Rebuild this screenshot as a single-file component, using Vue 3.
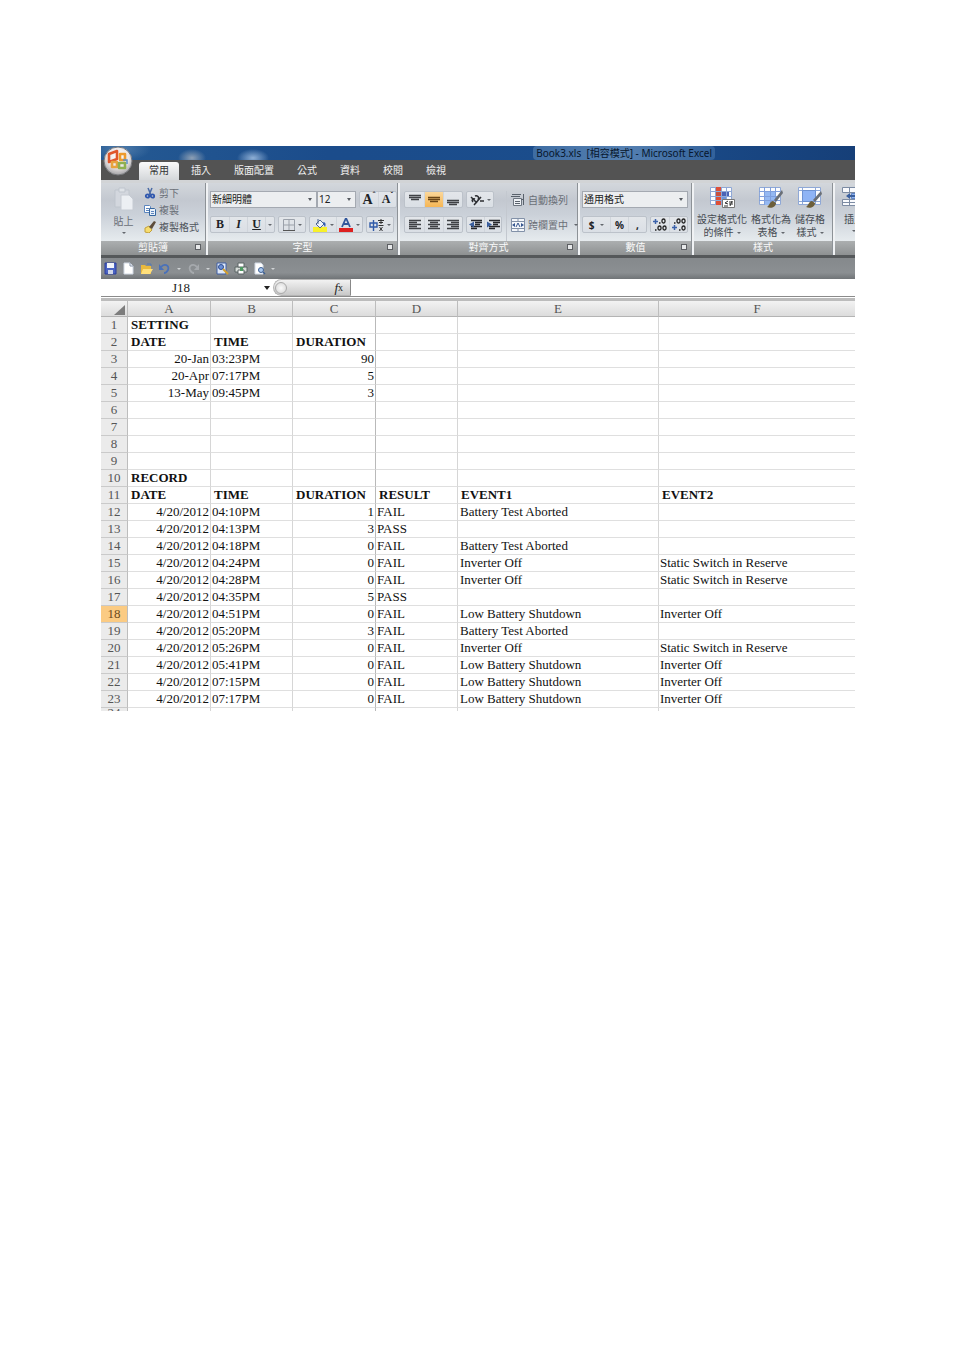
<script setup>
import { ref } from 'vue'

const tabs = ['常用', '插入', '版面配置', '公式', '資料', '校閱', '檢視']
const activeTab = ref('常用')
const fontName = ref('新細明體')
const fontSize = ref('12')
const numberFormat = ref('通用格式')
const cellName = ref('J18')
const formula = ref('')
const selectedRow = 18

const columns = ['A', 'B', 'C', 'D', 'E', 'F']

const head = ['DATE', 'TIME', 'DURATION']
const empty = () => ['', '', '', '', '', '']
const rows = [
  { bold: true, cells: ['SETTING', '', '', '', '', ''] },
  { bold: true, cells: [...head, '', '', ''] },
  { cells: ['20-Jan', '03:23PM', '90', '', '', ''] },
  { cells: ['20-Apr', '07:17PM', '5', '', '', ''] },
  { cells: ['13-May', '09:45PM', '3', '', '', ''] },
  { cells: empty() },
  { cells: empty() },
  { cells: empty() },
  { cells: empty() },
  { bold: true, cells: ['RECORD', '', '', '', '', ''] },
  { bold: true, cells: [...head, 'RESULT', 'EVENT1', 'EVENT2'] },
  { cells: ['4/20/2012', '04:10PM', '1', 'FAIL', 'Battery Test Aborted', ''] },
  { cells: ['4/20/2012', '04:13PM', '3', 'PASS', '', ''] },
  { cells: ['4/20/2012', '04:18PM', '0', 'FAIL', 'Battery Test Aborted', ''] },
  { cells: ['4/20/2012', '04:24PM', '0', 'FAIL', 'Inverter Off', 'Static Switch in Reserve'] },
  { cells: ['4/20/2012', '04:28PM', '0', 'FAIL', 'Inverter Off', 'Static Switch in Reserve'] },
  { cells: ['4/20/2012', '04:35PM', '5', 'PASS', '', ''] },
  { cells: ['4/20/2012', '04:51PM', '0', 'FAIL', 'Low Battery Shutdown', 'Inverter Off'] },
  { cells: ['4/20/2012', '05:20PM', '3', 'FAIL', 'Battery Test Aborted', ''] },
  { cells: ['4/20/2012', '05:26PM', '0', 'FAIL', 'Inverter Off', 'Static Switch in Reserve'] },
  { cells: ['4/20/2012', '05:41PM', '0', 'FAIL', 'Low Battery Shutdown', 'Inverter Off'] },
  { cells: ['4/20/2012', '07:15PM', '0', 'FAIL', 'Low Battery Shutdown', 'Inverter Off'] },
  { cells: ['4/20/2012', '07:17PM', '0', 'FAIL', 'Low Battery Shutdown', 'Inverter Off'] }
]
</script>

<template>
  <main class="page">
    <section class="excel">
      <header class="titlebar">
        <h1>Book3.xls&nbsp; [相容模式] - Microsoft Excel</h1>
      </header>

      <button class="office" aria-label="Office">
        <svg width="30" height="30" viewBox="0 0 30 30">
          <defs>
            <radialGradient id="orb" cx="50%" cy="35%" r="65%">
              <stop offset="0" stop-color="#ffffff" />
              <stop offset="0.6" stop-color="#e9e4e4" />
              <stop offset="1" stop-color="#a3a3a6" />
            </radialGradient>
          </defs>
          <circle cx="15" cy="15" r="14" fill="url(#orb)" stroke="#77787c" />
          <g fill="none" stroke-width="2.6" stroke-linejoin="round">
            <path d="M6 8l8-3v8l-8 3z" stroke="#e0562a" />
            <path d="M17 8h5v6h-5z" stroke="#ee9a2b" />
            <path d="M9 16h5v5H9z" stroke="#e8a33d" />
            <path d="M16 17h6v5h-6z" stroke="#8fb04f" />
          </g>
          <path d="M20 14h4v4" stroke="#5b8fc9" stroke-width="1.5" fill="none" />
        </svg>
      </button>

      <nav class="tabs">
        <button
          v-for="t in tabs"
          :key="t"
          class="tab"
          :class="{ active: t === activeTab }"
          @click="activeTab = t"
        >{{ t }}</button>
      </nav>

      <div class="ribbon">
        <section class="group clipboard">
          <div class="body">
            <button class="big faded">
              <svg width="22" height="24" viewBox="0 0 22 24">
                <path d="M2 3h14v17H2z" fill="#d3d7de" stroke="#bfc5cd" />
                <path d="M6 1h6v4H6z" fill="#dfe3e8" stroke="#bfc5cd" />
                <path d="M8 8h8l4 4v11H8z" fill="#eceff3" stroke="#c6cbd3" />
              </svg>
              <span>貼上</span>
              <i class="arrow"></i>
            </button>
            <div class="stack">
              <button class="small faded">
                <svg width="12" height="12" viewBox="0 0 12 12">
                  <path d="M4 1l3 7M8 1L5 8" stroke="#4a6aa5" stroke-width="1.5" />
                  <circle cx="3.500" cy="9" r="1.700" fill="none" stroke="#2f57ae" stroke-width="1.800" />
                  <circle cx="8.500" cy="9" r="1.700" fill="none" stroke="#2f57ae" stroke-width="1.800" />
                </svg>剪下
              </button>
              <button class="small faded">
                <svg width="12" height="12" viewBox="0 0 12 12">
                  <path d="M.5 1.500h5l1 1v6h-6z" fill="#fff" stroke="#5c86bf" />
                  <path d="M5.500 4.500h5l1 1v6h-6z" fill="#e8f0fa" stroke="#35669f" />
                  <path d="M7 7.500h3M7 9.500h3M2 4.500h3M2 6.500h3" stroke="#5c86bf" />
                </svg>複製
              </button>
              <button class="small">
                <svg width="12" height="12" viewBox="0 0 12 12">
                  <path d="M1 7l4-2 3 4-3 3-4-1z" fill="#f6dc6e" stroke="#c2a03c" />
                  <path d="M5 6l5-6 2 1-4 7z" fill="#5d4c3a" />
                </svg>複製格式
              </button>
            </div>
          </div>
          <footer>剪貼簿<i class="launch"></i></footer>
        </section>

        <section class="group font">
          <div class="body rows">
            <div class="line">
              <div class="pick wide"><select v-model="fontName" aria-label="字型"><option>新細明體</option></select></div>
              <div class="pick size"><select v-model="fontSize" aria-label="大小"><option>12</option></select></div>
              <div class="set">
                <button class="serif grow" aria-label="放大字型">A<sup>ˆ</sup></button>
                <button class="serif shrink" aria-label="縮小字型">A<sup>ˇ</sup></button>
              </div>
            </div>
            <div class="line">
              <div class="set">
                <button class="serif">B</button>
                <button class="serif it">I</button>
                <button class="serif un">U</button>
                <button class="drop" aria-label="底線選項"><i class="arrow"></i></button>
              </div>
              <div class="set">
                <button class="duo" aria-label="框線">
                  <svg width="12" height="12" viewBox="0 0 12 12"><path d="M.5.5h11v11M.5.500v11M6 .500v11M.5 6h11" fill="none" stroke="#9ba1aa" /><path d="M0 11.500h12" stroke="#555" /></svg>
                  <i class="arrow"></i>
                </button>
              </div>
              <div class="set">
                <button class="duo" aria-label="填滿色彩">
                  <svg width="14" height="14" viewBox="0 0 14 14">
                    <path d="M0 9h14v5H0z" fill="#f7f02a" />
                    <path d="M3 6l4-4 4 4-4 4z" fill="#eef3fb" stroke="#4c6694" />
                    <path d="M5 1v5" stroke="#4c6694" />
                    <path d="M10 4c3 0 3 3 2 5-1-1-1-3-2-5z" fill="#2f5cb4" />
                  </svg>
                  <i class="arrow"></i>
                </button>
                <button class="duo" aria-label="字型色彩">
                  <svg width="14" height="14" viewBox="0 0 14 14">
                    <path d="M3 9l4-9 4 9M5 6h4" fill="none" stroke="#31579c" stroke-width="1.800" />
                    <path d="M0 10h14v4H0z" fill="#dd2020" />
                  </svg>
                  <i class="arrow"></i>
                </button>
              </div>
              <div class="set">
                <button class="phon duo" aria-label="注音標示">
                  <svg width="15" height="14" viewBox="0 0 15 14">
                    <path d="M1 5h7v4H1zM4.500 2v11" fill="none" stroke="#2f5aa8" stroke-width="1.400" />
                    <path d="M9 2.500h6M10 4.500h4M12 1v5M9.500 7.500h5M10.500 9l3 4M13.500 9l-3 4" fill="none" stroke="#333" />
                  </svg>
                  <i class="arrow"></i>
                </button>
              </div>
            </div>
          </div>
          <footer>字型<i class="launch"></i></footer>
        </section>

        <section class="group align">
          <div class="body">
            <div class="rows">
              <div class="line">
                <div class="set">
                  <button aria-label="靠上"><svg width="12" height="13" viewBox="0 0 12 13"><path d="M0 2.500h12M0 4.500h12M2 6.500h8" stroke="#3f4145" stroke-width="1.500" /></svg></button>
                  <button class="on" aria-label="置中"><svg width="12" height="13" viewBox="0 0 12 13"><path d="M0 4.500h12M0 6.500h12M2 8.500h8" stroke="#6b4617" stroke-width="1.500" /></svg></button>
                  <button aria-label="靠下"><svg width="12" height="13" viewBox="0 0 12 13"><path d="M0 7.500h12M0 9.500h12M2 11.500h8" stroke="#3f4145" stroke-width="1.500" /></svg></button>
                </div>
                <div class="set">
                  <button class="orient" aria-label="方向">
                    <svg width="15" height="12" viewBox="0 0 15 12"><path d="M1 3l6 6M3 8c-2-2 0-4 2-3M5 2c2-1 5 1 3 4M11 3l-7 8M10 7h4" fill="none" stroke="#2c2e32" stroke-width="1.500" /></svg>
                    <i class="arrow"></i>
                  </button>
                </div>
              </div>
              <div class="line">
                <div class="set">
                  <button aria-label="靠左"><svg width="12" height="11" viewBox="0 0 12 11"><path d="M0 1.500h12M0 3.500h8M0 5.500h12M0 7.500h8M0 9.500h12" stroke="#3f4145" stroke-width="1.300" /></svg></button>
                  <button aria-label="水平置中"><svg width="12" height="11" viewBox="0 0 12 11"><path d="M0 1.500h12M2 3.500h8M0 5.500h12M2 7.500h8M0 9.500h12" stroke="#3f4145" stroke-width="1.300" /></svg></button>
                  <button aria-label="靠右"><svg width="12" height="11" viewBox="0 0 12 11"><path d="M0 1.500h12M4 3.500h8M0 5.500h12M4 7.500h8M0 9.500h12" stroke="#3f4145" stroke-width="1.300" /></svg></button>
                </div>
                <div class="set indent">
                  <button aria-label="減少縮排"><svg width="13" height="11" viewBox="0 0 13 11"><path d="M2 1.500h11M6 3.500h7M6 5.500h5M2 7.500h11M2 9.500h6" stroke="#26282c" stroke-width="1.300" /><path d="M5 2.500L0 5.500l5 3z" fill="#3b5f9d" /></svg></button>
                  <button aria-label="增加縮排"><svg width="13" height="11" viewBox="0 0 13 11"><path d="M2 1.500h11M6 3.500h7M6 5.500h5M2 7.500h11M2 9.500h6" stroke="#26282c" stroke-width="1.300" /><path d="M0 2.500l5 3-5 3z" fill="#3b5f9d" /></svg></button>
                </div>
              </div>
            </div>
            <div class="rows wraps">
              <button class="small faded">
                <svg width="14" height="14" viewBox="0 0 14 14"><path d="M2.500 5.500h8v7h-8z" fill="#eef1f5" stroke="#6d757f" /><path d="M1 1.500h9M0 3.500h9M4 8.500h5M4 10.500h5M12.500 1v11M10 6.500h3" stroke="#59616b" /></svg>自動換列
              </button>
              <button class="small faded">
                <svg width="14" height="14" viewBox="0 0 14 14"><path d="M.5.500h13v13H.5z" fill="#f3f6fa" stroke="#8291a8" /><path d="M1 3.500h12M1 10.500h12M7 1v3M7 10v3" stroke="#8291a8" /><path d="M1 7l3-2v4zM13 7l-3-2v4z" fill="#35558f" /><path d="M5 9l2-4 2 4" fill="none" stroke="#35558f" /></svg>跨欄置中<i class="arrow"></i>
              </button>
            </div>
          </div>
          <footer>對齊方式<i class="launch"></i></footer>
        </section>

        <section class="group number">
          <div class="body rows">
            <div class="line">
              <div class="pick full"><select v-model="numberFormat" aria-label="數值格式"><option>通用格式</option></select></div>
            </div>
            <div class="line">
              <div class="set">
                <button class="sym cash">$<i class="arrow"></i></button>
                <button class="sym">%</button>
                <button class="sym comma">,</button>
              </div>
              <div class="set">
                <button class="dec" aria-label="增加小數位數">
                  <svg width="14" height="13" viewBox="0 0 14 13"><path d="M0 3.500h5M2.500 1v5" stroke="#3b62ab" stroke-width="1.500" /><path d="M6 5h1.500M2 12h1.500" stroke="#222" stroke-width="1.500" /><g fill="none" stroke="#222" stroke-width="1.300"><rect x="9" y="1" width="3" height="4" rx="1.500" /><rect x="5" y="8" width="3" height="4" rx="1.500" /><rect x="10" y="8" width="3" height="4" rx="1.500" /></g></svg>
                </button>
                <button class="dec" aria-label="減少小數位數">
                  <svg width="14" height="13" viewBox="0 0 14 13"><path d="M0 9.500h5M2.500 7v5" stroke="#3b62ab" stroke-width="1.500" /><path d="M2 5h1.500M7 12h1.500" stroke="#222" stroke-width="1.500" /><g fill="none" stroke="#222" stroke-width="1.300"><rect x="5" y="1" width="3" height="4" rx="1.500" /><rect x="10" y="1" width="3" height="4" rx="1.500" /><rect x="10" y="8" width="3" height="4" rx="1.500" /></g></svg>
                </button>
              </div>
            </div>
          </div>
          <footer>數值<i class="launch"></i></footer>
        </section>

        <section class="group styles">
          <div class="body">
            <button class="big">
              <svg width="26" height="23" viewBox="0 0 26 23">
                <path d="M1.500 1.500h21v17h-21z" fill="#fbfcfe" stroke="#8fa8d6" />
                <path d="M7 1h5v5H7zM7 10h5v9H7z" fill="#de4f38" />
                <path d="M7 6h11v4H7z" fill="#c9503f" /><path d="M13 6h7v4h-7z" fill="#4a63b5" />
                <path d="M12 10h5v4h-5z" fill="#6d95dc" />
                <path d="M1 5.500h21M1 10.500h21M1 14.500h21M6.500 1v18M12.500 1v18M17.500 1v18" stroke="#8fa8d6" />
                <path d="M13.500 13.500h12v8h-12z" fill="#fff" stroke="#777" />
                <path d="M19 15l-3 2 3 1M15 20h4M20 16h4M20 18h4M21 20l2-5" fill="none" stroke="#333" />
              </svg>
              <span>設定格式化</span><span>的條件<i class="arrow"></i></span>
            </button>
            <button class="big">
              <svg width="26" height="23" viewBox="0 0 26 23">
                <path d="M1.500 1.500h21v17h-21z" fill="#fbfcfe" stroke="#8fa8d6" />
                <path d="M7 5h11v14H7z" fill="#94b8f2" />
                <path d="M1 5.500h21M1 10.500h21M1 14.500h21M6.500 1v18M12.500 1v18M17.500 1v18" stroke="#7f9fdc" />
                <path d="M24 4l-8 10 2 2 7-9z" fill="#6a6f76" /><path d="M9 21c2-1 3-6 6-6l3 2c0 4-5 6-9 4z" fill="#6d5f3a" />
              </svg>
              <span>格式化為</span><span>表格<i class="arrow"></i></span>
            </button>
            <button class="big">
              <svg width="26" height="23" viewBox="0 0 26 23">
                <path d="M1.500 1.500h22v17h-22z" fill="#fbfcfe" stroke="#8fa8d6" />
                <path d="M1 4.500h22M1 15.500h22M5.500 1v18M18.500 1v18" stroke="#8fa8d6" />
                <path d="M5.500 4.500h13v11h-13z" fill="#8fb4f5" stroke="#6d92d2" />
                <path d="M24 5l-8 9 2 2 7-8z" fill="#6a6f76" /><path d="M9 21c2-1 3-6 6-6l3 2c0 4-5 6-9 4z" fill="#6d5f3a" />
              </svg>
              <span>儲存格</span><span>樣式<i class="arrow"></i></span>
            </button>
          </div>
          <footer>樣式</footer>
        </section>

        <section class="group cells">
          <div class="body">
            <button class="big">
              <svg width="26" height="23" viewBox="0 0 26 23">
                <path d="M1.500 1.500h21v5h-21zM1.500 13.500h21v6h-21zM8.500 1v5M15.500 1v5M8.500 13v6M15.500 13v6M1 16.500h21" fill="#f9fafd" stroke="#7c8ba3" />
                <path d="M10.500 7.500h13v5h-13z" fill="#8fb3ee" stroke="#5f84c5" /><path d="M5 10l4-3v2h5v2H9v2z" fill="#3a5f9e" />
              </svg>
              <span>插入</span><i class="arrow"></i>
            </button>
          </div>
          <footer></footer>
        </section>
      </div>

      <div class="quick">
        <button aria-label="儲存"><svg width="13" height="13" viewBox="0 0 13 13"><path d="M1 1h11v11H1z" fill="#4a63c4" stroke="#2d3f9a" /><path d="M3 1h7v5H3z" fill="#f2f4fa" /><path d="M4 8h5v4H4z" fill="#cfd6ea" /></svg></button>
        <button aria-label="新增"><svg width="13" height="13" viewBox="0 0 13 13"><path d="M2 1h6l3 3v8H2z" fill="#fff" stroke="#d0d8e4" /><path d="M8 1v3h3" fill="none" stroke="#8390a5" /></svg></button>
        <button aria-label="開啟"><svg width="13" height="13" viewBox="0 0 13 13"><path d="M1 3h4l1 1h5v8H1z" fill="#e9b93d" /><path d="M3 7h10l-3 5H1z" fill="#ffdf7b" /><path d="M7 2h4v2" fill="none" stroke="#4f78b8" /></svg></button>
        <button aria-label="復原"><svg width="13" height="13" viewBox="0 0 13 13"><path d="M3 5c3-4 9-2 7 3-1 2-2 3-4 3" fill="none" stroke="#4a71b8" stroke-width="1.800" /><path d="M1 2v6h5z" fill="#4a71b8" /></svg></button>
        <i class="arrow light"></i>
        <button aria-label="重複"><svg width="13" height="13" viewBox="0 0 13 13"><path d="M10 5C7 1 1 3 3 8c1 2 2 3 4 3" fill="none" stroke="#a5a9ad" stroke-width="1.800" /><path d="M12 2v6H7z" fill="#a5a9ad" /></svg></button>
        <i class="arrow light"></i>
        <button aria-label="預覽"><svg width="13" height="13" viewBox="0 0 13 13"><path d="M1 1h9v11H1z" fill="#dfe8f7" stroke="#3f5fa5" /><circle cx="5" cy="5" r="2.500" fill="#6b8fd6" stroke="#2f4e90" /><path d="M7 7l5 5" stroke="#d5a02f" stroke-width="2" /></svg></button>
        <button aria-label="列印"><svg width="14" height="13" viewBox="0 0 14 13"><path d="M1 5h12v5H1z" fill="#d7dcd9" stroke="#5b6464" /><path d="M4 1h6v4H4zM4 8h6v4H4z" fill="#fff" stroke="#5b6464" /><path d="M6 5h3v4H6z" fill="#4d9b62" /></svg></button>
        <button aria-label="預覽列印"><svg width="13" height="13" viewBox="0 0 13 13"><path d="M2 1h6l2 2v9H2z" fill="#fff" stroke="#d0d8e4" /><circle cx="8" cy="8" r="2.500" fill="#a9c7ec" stroke="#3d5f92" /><path d="M10 10l2 2" stroke="#3d5f92" stroke-width="1.500" /></svg></button>
        <i class="arrow light more"></i>
      </div>

      <div class="formula">
        <div class="name"><input v-model="cellName" aria-label="名稱方塊" /><i class="arrow dark"></i></div>
        <div class="fx"><i class="knob"></i><button aria-label="插入函數"><em>f</em><sub>x</sub></button></div>
        <input v-model="formula" class="entry" aria-label="資料編輯列" />
      </div>

      <table class="sheet">
        <colgroup>
          <col class="c-num" /><col class="c-a" /><col class="c-b" /><col class="c-a" /><col class="c-b" /><col class="c-e" /><col />
        </colgroup>
        <thead>
          <tr>
            <th class="corner"><svg width="11" height="10" viewBox="0 0 11 10"><path d="M11 0v10H0z" fill="#7d7d7d" /></svg></th>
            <th v-for="c in columns" :key="c">{{ c }}</th>
          </tr>
        </thead>
        <tbody>
          <tr v-for="(r, i) in rows" :key="i" :class="{ bold: r.bold }">
            <th :class="{ picked: i + 1 === selectedRow }">{{ i + 1 }}</th>
            <td v-for="(v, j) in r.cells" :key="j" :class="{ num: !r.bold && (j === 0 || j === 2) }">{{ v }}</td>
          </tr>
          <tr class="cut">
            <th><div>24</div></th>
            <td v-for="c in columns" :key="c"></td>
          </tr>
        </tbody>
      </table>
    </section>
  </main>
</template>

<style>
body {
  margin: 0;
  background: #fff;
}
</style>

<style scoped>
.page {
  padding: 146px 99px 0 101px;
  font-family: "Noto Sans", "Noto Sans CJK TC", sans-serif;
  font-size: 10px;
}
.excel {
  position: relative;
  overflow: hidden;
}
button, input, select {
  font: inherit;
  color: inherit;
  margin: 0;
  padding: 0;
  border: 0;
  background: none;
  border-radius: 0;
  outline: 0;
}
button {
  display: flex;
  align-items: center;
  justify-content: center;
  white-space: nowrap;
}
svg {
  display: block;
  flex: none;
}
.titlebar {
  height: 14px;
  padding-right: 140px;
  display: flex;
  justify-content: flex-end;
  align-items: center;
  background:
    radial-gradient(ellipse 16px 9px at 152px 12px, #8fb0d6, transparent),
    radial-gradient(ellipse 14px 9px at 91px 12px, #8ea0b5, transparent),
    radial-gradient(ellipse 30px 12px at 20px 3px, #4f7cab, transparent),
    linear-gradient(90deg, #255a93, #1b4c8b 30%, #1b4d8c 70%, #163f78);
}
h1 {
  margin: 0;
  padding: 0 3px;
  font-size: 10px;
  line-height: 14px;
  font-weight: 400;
  color: #08172d;
  background: linear-gradient(90deg, #3f6da3, #5580b1 50%, #33629b);
  border-radius: 4px;
}
.office {
  position: absolute;
  left: 2px;
  top: 0;
  z-index: 2;
}
.tabs {
  height: 20px;
  padding-left: 38px;
  display: flex;
  gap: 1px;
  align-items: flex-end;
  background: #535353;
}
.tab {
  height: 18px;
  padding: 0 11px 3px;
  color: #f0f0f0;
  border-radius: 3px 3px 0 0;
}
.tab.active {
  padding: 0 10px 3px;
  background: linear-gradient(#fafafa, #d4d7da);
  color: #333;
}
.ribbon {
  display: flex;
  height: 78px;
  box-sizing: border-box;
  border-top: 3px solid #d2d4d6;
  border-bottom: 3px solid #55585a;
  background: #8f9396;
  overflow: hidden;
}
.group {
  flex: none;
  display: flex;
  flex-direction: column;
  box-sizing: border-box;
  border-right: 2px solid #f0f2f4;
  box-shadow: inset -1px 0 #8d9297;
}
.group .body {
  height: 58px;
  box-sizing: border-box;
  display: flex;
  margin-right: 1px;
  background: linear-gradient(#d3d7dc, #c3c8d0 30%, #cbd1d9 55%, #e6ebee);
}
.group footer {
  position: relative;
  flex: 1;
  margin-right: 1px;
  line-height: 12px;
  text-align: center;
  color: #fafafa;
  background: linear-gradient(#acafb0, #8e9192);
}
.launch {
  position: absolute;
  right: 4px;
  top: 3px;
  width: 4px;
  height: 4px;
  border: 1px solid #5c5f63;
  background: #e7e9ea;
}
.clipboard { width: 107px; }
.font { width: 192px; }
.align { width: 180px; }
.number { width: 114px; }
.styles { width: 141px; }
.cells { width: 60px; }
.body.rows, .rows {
  display: flex;
  flex-direction: column;
  gap: 8px;
}
.body.rows { padding: 8px 2px 0 2px; }
.line {
  display: flex;
  gap: 3px;
  height: 17px;
}
.arrow {
  flex: none;
  display: inline-block;
  width: 0;
  height: 0;
  margin-left: 3px;
  vertical-align: middle;
  border: 2px solid transparent;
  border-top-color: #63676d;
  border-bottom: 0;
}
.arrow.light { border-top-color: #d0d3d5; }
.arrow.dark { border-width: 4px 3px 0; border-top-color: #222; }
.big {
  flex-direction: column;
  justify-content: flex-start;
  line-height: 13px;
  color: #464b52;
}
.big > .arrow { margin: 4px 0 0; }
.big svg { margin-bottom: 4px; }
.clipboard .big { width: 43px; padding: 4px 0 0 2px; }
.faded { color: #6a6f77; }
.stack {
  display: flex;
  flex-direction: column;
  padding-top: 1px;
}
.small {
  height: 17px;
  gap: 3px;
  justify-content: flex-start;
  color: #50555c;
}
.small.faded { color: #6a6f77; }
.pick {
  position: relative;
  flex: none;
  box-sizing: border-box;
  border: 1px solid #a4a9b1;
  background: #eceef0;
  color: #222;
}
.pick select {
  display: block;
  appearance: none;
  width: 100%;
  height: 15px;
  padding-left: 1px;
  line-height: 15px;
}
.pick::after {
  content: "";
  position: absolute;
  right: 4px;
  top: 6px;
  border: 2px solid transparent;
  border-top: 3px solid #555a60;
  border-bottom: 0;
}
.wide { width: 107px; }
.size { width: 39px; margin-left: -3px; }
.full { flex: 1; }
.set {
  display: flex;
  flex: none;
  box-sizing: border-box;
  border: 1px solid #bcc2ca;
  border-radius: 2px;
  background: linear-gradient(#e3e6ea, #dadfe5);
}
.set button { box-sizing: border-box; }
.set button + button { border-left: 1px solid #d0d5db; }
.serif {
  font-family: "Liberation Serif", serif;
  font-size: 12px;
  font-weight: 700;
  color: #202226;
}
.font .set .serif { width: 18px; }
.font .set .drop { width: 9px; }
.font .set .drop .arrow { margin: 0; }
.font .set .duo { width: 26px; }
.font .set .grow { font-size: 14px; }
.serif sup { font-size: 8px; line-height: 8px; align-self: flex-start; }
.it { font-style: italic; }
.un { text-decoration: underline; }
.align .body { padding: 8px 0 0 4px; gap: 4px; }
.align .set button { width: 19px; }
.align .set .orient { width: 26px; }
.align .set.indent button { width: 17px; }
.align .set .on { background: linear-gradient(#fbd79a, #f6b654); }
.align .set .orient .arrow { margin-left: 2px; }
.wraps { border-left: 1px solid #c3c8cf; padding-left: 4px; }
.number .line { justify-content: space-between; }
.number .body.rows { padding-right: 3px; }
.number .set .sym { width: 18px; font-weight: 700; font-size: 10px; color: #202226; }
.number .set .cash { width: 27px; }
.number .set .cash .arrow { margin-left: 6px; }
.number .set .dec { width: 18px; }
.styles .body { padding: 3px 1px 0 3px; gap: 4px; }
.cells .body { padding: 3px 0 0 6px; }
.quick {
  display: flex;
  align-items: center;
  gap: 5px;
  height: 21px;
  padding-left: 3px;
  background: linear-gradient(#85898c, #8b8f92 70%, #707477);
}
.quick .arrow { margin: 0 1px; }
.quick .more { margin-left: 0; }
.formula {
  display: flex;
  height: 17px;
  border-bottom: 1px solid #8b8b8b;
  font-family: "Liberation Serif", "Noto Sans CJK TC", serif;
  font-size: 13px;
  color: #222;
}
.name {
  display: flex;
  align-items: center;
  width: 172px;
}
.name input {
  width: 160px;
  text-align: center;
}
.fx {
  display: flex;
  align-items: center;
  justify-content: space-between;
  width: 78px;
  box-sizing: border-box;
  padding: 0 7px 0 1px;
  border: 1px solid #b5b5b5;
  border-right-color: #888;
  border-radius: 9px 0 0 9px;
  background: linear-gradient(#f2f2f2, #c9c9c9);
}
.knob {
  width: 10px;
  height: 10px;
  border: 1px solid #aaa;
  border-radius: 50%;
  background: radial-gradient(#fafafa, #d5d5d5);
}
.fx sub { font-size: 10px; }
.entry { flex: 1; min-width: 0; }
.sheet {
  width: 100%;
  table-layout: fixed;
  border-collapse: separate;
  border-spacing: 0;
  margin-top: 1px;
  border-top: 3px solid #bcbcbc;
  font-family: "Liberation Serif", serif;
  font-size: 13px;
  line-height: 16px;
  color: #111;
}
.c-num { width: 27px; }
.c-a { width: 83px; }
.c-b { width: 82px; }
.c-e { width: 201px; }
th, td {
  height: 16px;
  padding: 0 1px;
  border-right: 1px solid #d6d6d6;
  border-bottom: 1px solid #dfdfdf;
  text-align: left;
  font-weight: 400;
  white-space: nowrap;
}
th {
  padding: 0;
  text-align: center;
  color: #555;
  background: #ebebeb;
  border-right-color: #bdbdbd;
  border-bottom-color: #cacaca;
}
thead th {
  height: 15px;
  line-height: 15px;
  background: linear-gradient(#f3f3f3, #dcdcdc);
  border-bottom-color: #b4b4b4;
}
.corner svg { margin: 2px 2px 0 auto; }
td:nth-child(4) { border-right-color: #b9b9b9; }
td:nth-child(6) { padding-left: 2px; }
td:last-child, thead th:last-child { border-right: 0; }
.num { text-align: right; }
.bold td { font-weight: 700; padding-left: 3px; }
.picked { background: #fbcb83; color: #6b4a1c; }
.cut th, .cut td { height: 3px; border-bottom: 0; }
.cut th div { height: 3px; line-height: 10px; overflow: hidden; }
</style>
